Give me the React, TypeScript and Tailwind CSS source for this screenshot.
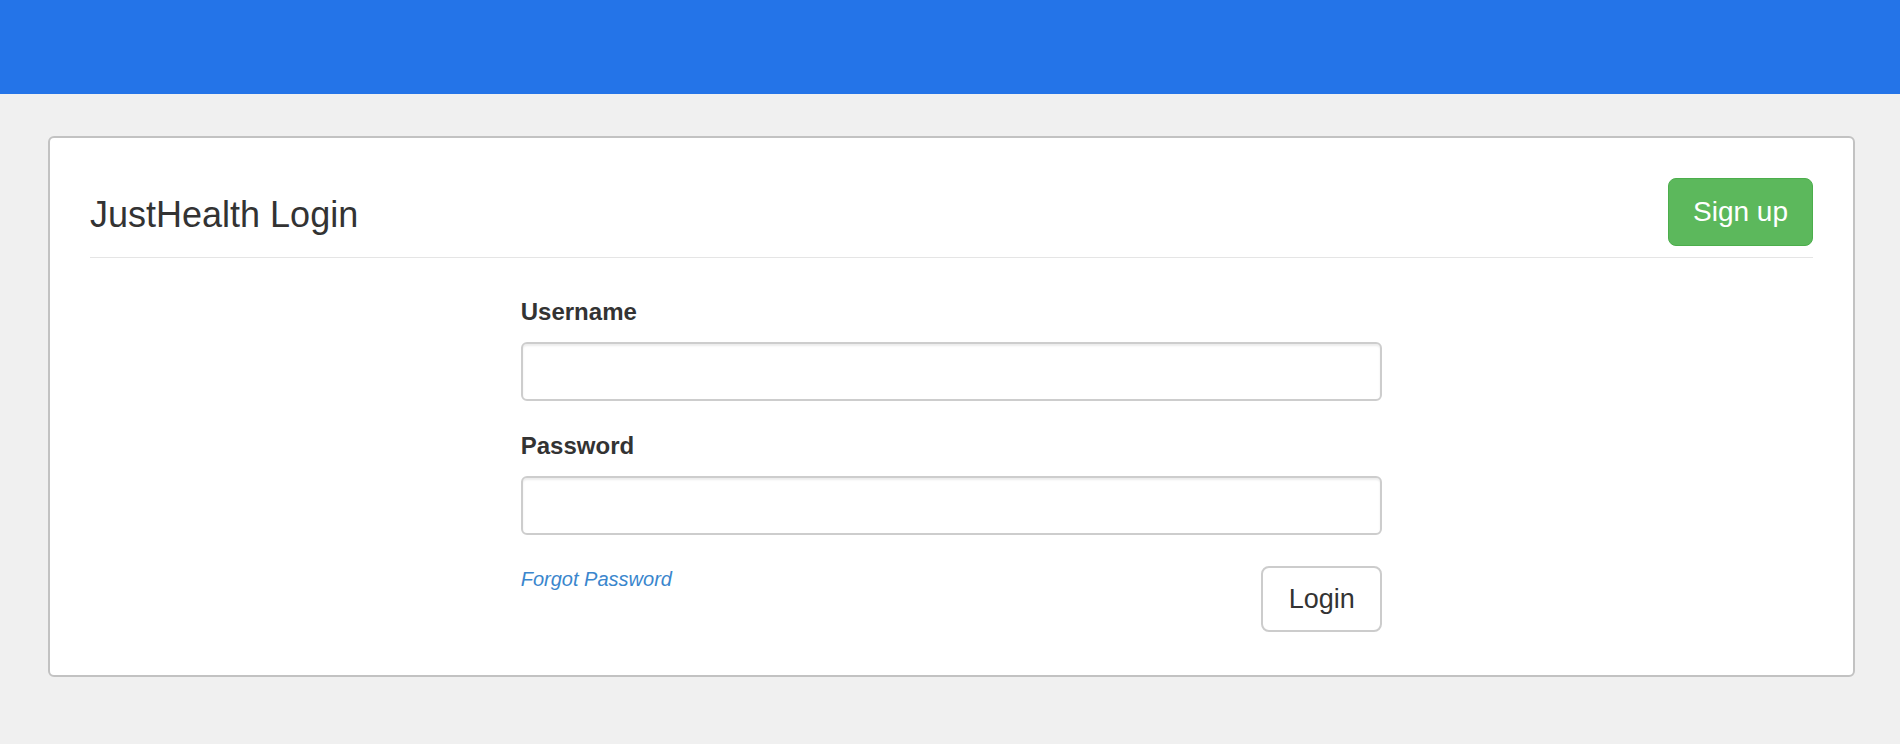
export default function App() {
  return (
    <div className="min-h-screen bg-[#f0f0f0] font-['Liberation_Sans',Arial,sans-serif] text-[#333]">
      <div className="h-[94px] bg-[#2474e8]"></div>

      <div className="pt-[42px] pl-[48px] pr-[45px]">
        <div className="rounded-[6px] border-2 border-[#c2c2c2] bg-white px-[40px] pb-[43px]">
          <div className="flex items-center justify-between border-b border-[#e5e5e5] pt-[40px] pb-[11px]">
            <h3 className="mt-[6px] text-[36px] leading-[1.1]">JustHealth Login</h3>
            <button className="flex h-[68px] w-[145px] items-center justify-center rounded-[8px] border border-[#4cae4c] bg-[#5cb85c] text-[28px] text-white">
              Sign up
            </button>
          </div>

          <div className="mx-auto w-1/2 pt-[37px]">
            <label className="mb-[13px] block text-[24px] font-bold leading-[34px]">Username</label>
            <input
              type="text"
              className="block h-[59px] w-full rounded-[6px] border-2 border-[#cdcdcd] px-3 shadow-[inset_0_2px_2px_rgba(0,0,0,0.075)] outline-none"
            />

            <label className="mt-[28px] mb-[13px] block text-[24px] font-bold leading-[34px]">Password</label>
            <input
              type="password"
              className="block h-[59px] w-full rounded-[6px] border-2 border-[#cdcdcd] px-3 shadow-[inset_0_2px_2px_rgba(0,0,0,0.075)] outline-none"
            />

            <div className="mt-[31px] flex items-start justify-between">
              <a href="#" className="text-[20px] italic leading-[27px] text-[#3a86cd]">
                Forgot Password
              </a>
              <button className="flex h-[66px] w-[121px] items-center justify-center rounded-[8px] border-2 border-[#cccccc] bg-white text-[27px] text-[#333]">
                Login
              </button>
            </div>
          </div>
        </div>
      </div>
    </div>
  );
}
